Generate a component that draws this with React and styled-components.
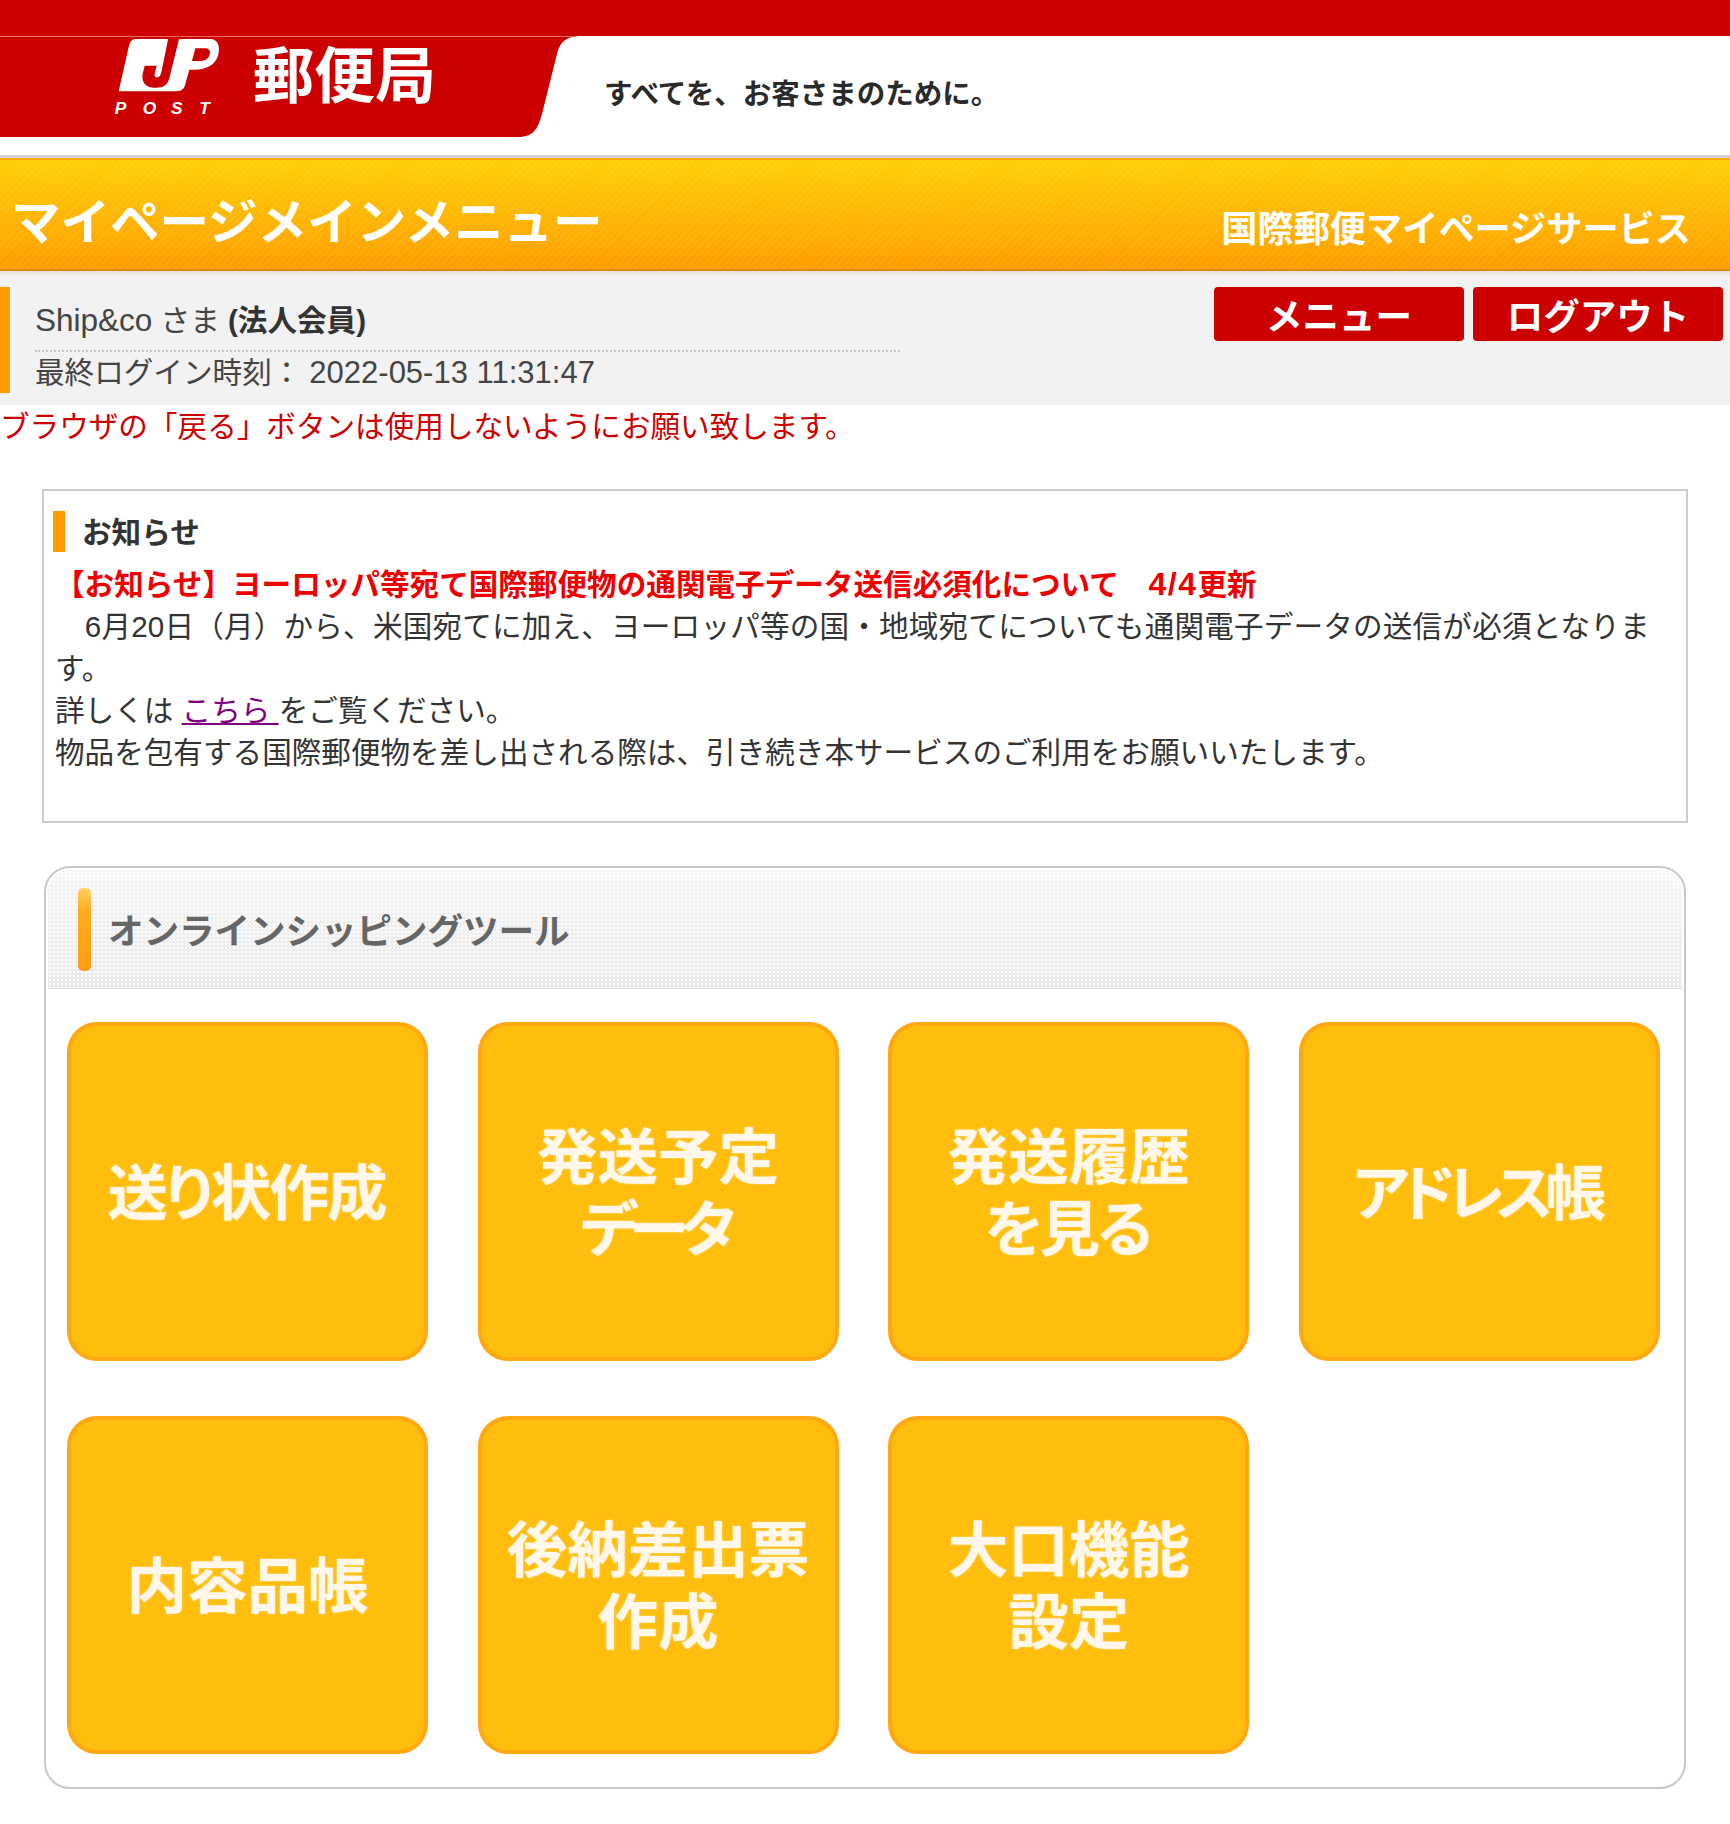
import React from "react";
import styled, { createGlobalStyle } from "styled-components";

const GlobalStyle = createGlobalStyle`
    html, body {
        margin: 0;
        padding: 0;
        background: #fff;
    }
    body {
        font-family: "Liberation Sans", "Noto Sans CJK JP", sans-serif;
        color: #333;
        text-spacing-trim: space-all;
    }
    * {
        box-sizing: border-box;
    }
`;

const Page = styled.div`
    width: 1730px;
    min-height: 1824px;
    background: #fff;
`;

const Header = styled.header`
    height: 158px;
    padding-top: 36px;
    background: linear-gradient(#cc0000 36px, #fff 36px);
    border-bottom: 3px solid #cfcfcf;
`;

const Masthead = styled.div`
    display: flex;
    align-items: center;
`;

const Brand = styled.div`
    display: flex;
    align-items: flex-start;
    width: 582px;
    height: 101px;
    padding-left: 100px;
    background: #cc0000;
    border-top: 1px solid #e46a6a;
    clip-path: path("M0 0H582C566 0 560 6 557 18L542 78C538 92 534 101 518 101H0Z");
`;

const BrandName = styled.span`
    margin: 5px 0 0 31px;
    font-size: 61px;
    line-height: 70px;
    font-weight: 700;
    color: #fff;
`;

const Tagline = styled.span`
    margin: 10px 0 0 22px;
    font-size: 28.5px;
    font-weight: 700;
    color: #2a2a2a;
`;

const Banner = styled.div`
    display: flex;
    justify-content: space-between;
    height: 113px;
    border-top: 2px solid #ffa800;
    border-bottom: 2px solid #dd8c00;
    color: #fff;
    font-weight: 700;
    background:
        repeating-linear-gradient(135deg, rgba(255, 255, 255, 0.06) 0 2px, transparent 2px 5px),
        linear-gradient(#ffd006, #ff9d00);
`;

const BannerTitle = styled.h1`
    margin: 0;
    padding: 31px 0 0 11px;
    font-size: 49.5px;
    line-height: 64px;
    font-weight: 700;
`;

const BannerService = styled.div`
    padding: 45px 39px 0 0;
    font-size: 36.2px;
    line-height: 50px;
`;

const Profile = styled.section`
    display: flex;
    justify-content: space-between;
    height: 134px;
    padding: 16px 7px 0 0;
    background: linear-gradient(#e6dfd8, #f2f2f2 6px);
`;

const UserBlock = styled.div`
    width: 900px;
    height: 106px;
    padding-left: 25px;
    border-left: 10px solid #ff9c00;
    font-size: 29.6px;
    color: #444;
`;

const UserName = styled.div`
    height: 65px;
    padding-top: 12px;
    line-height: 42px;
    border-bottom: 2px dotted #c4c4c4;

    b {
        color: #333;
    }
`;

const Latin = styled.span`
    font-size: 31.5px;
`;

const LastLogin = styled.div`
    padding-top: 1px;
    line-height: 40px;
`;

const LoginTime = styled.span`
    margin-left: 8px;
    font-size: 31px;
`;

const ButtonRow = styled.div`
    display: flex;
    gap: 9px;
`;

const RedButton = styled.a`
    display: flex;
    align-items: center;
    justify-content: center;
    width: 250px;
    height: 54px;
    border-radius: 4px;
    background: #cc0000;
    color: #fff;
    font-size: 36.5px;
    font-weight: 700;
`;

const Warning = styled.p`
    margin: 0;
    padding-top: 1px;
    font-size: 29.6px;
    line-height: 42px;
    color: #cc0000;
`;

const NoticeBox = styled.section`
    height: 334px;
    margin: 41px 42px 0;
    padding: 20px 16px 0 11px;
    border: 2px solid #ccc;
    font-size: 29.6px;
    line-height: 42px;
    color: #333;
`;

const NoticeHeading = styled.h2`
    height: 41px;
    margin: 0 0 11px -2px;
    padding-left: 17px;
    border-left: 12px solid #ff9c00;
    font-size: 29.6px;
    line-height: 43px;
    font-weight: 700;
`;

const NoticeTitle = styled.div`
    color: #ee0000;
    font-weight: 700;
`;

const NoticeDate = styled.span`
    font-size: 32px;
    letter-spacing: 1.5px;
`;

const NoticeLead = styled.div`
    letter-spacing: 0.18px;
`;

const NoticeLink = styled.a`
    color: #800080;
    text-decoration: underline;
`;

const ToolPanel = styled.section`
    width: 1642px;
    height: 923px;
    margin: 43px 0 0 44px;
    padding: 2px;
    border: 2px solid #c8c8c8;
    border-radius: 26px;
`;

const ToolHeader = styled.div`
    display: flex;
    align-items: center;
    height: 119px;
    padding-left: 30px;
    border-radius: 22px 22px 0 0;
    border-bottom: 1px solid #ddd;
    background:
        radial-gradient(circle, rgba(255, 255, 255, 0.9) 1px, transparent 1.3px) 0 0 / 4px 4px,
        linear-gradient(#f6f6f6, #eaeaea);
`;

const ToolMarker = styled.span`
    width: 13px;
    height: 83px;
    margin-right: 17px;
    border-radius: 5px;
    background: linear-gradient(#ffd060, #ffaa1c 30%, #ff9c12);
`;

const ToolTitle = styled.h2`
    margin: -2px 0 0;
    font-size: 35.5px;
    font-weight: 700;
    color: #666;
`;

const TileGrid = styled.div`
    display: grid;
    grid-template-columns: repeat(4, 361px);
    grid-auto-rows: 338.5px;
    column-gap: 49.6px;
    row-gap: 55px;
    padding: 33px 0 0 19px;
`;

const Tile = styled.a`
    display: flex;
    align-items: center;
    justify-content: center;
    padding-top: 5px;
    text-align: center;
    border: 4px solid #ffa812;
    border-radius: 30px;
    background: #ffbe0d;
    color: #fff8ea;
    font-size: 60.5px;
    line-height: 72px;
    font-weight: 700;
    font-feature-settings: "palt";
    text-shadow: 0 0 2px rgba(255, 255, 255, 0.7);
`;

const TileLine = styled.div`
    letter-spacing: ${(props) => props.$squeeze || 0}px;
    padding-right: ${(props) => -(props.$squeeze || 0)}px;
`;

const JpMark = () => (
    <svg width="122" height="84" viewBox="0 18 366 252" aria-label="JP POST">
        <path
            fill="#fff"
            d="M108 24H334C354 26 362 48 354 74C346 100 322 116 282 116H268L254 166C250 176 242 181 228 181H56L86 48C90 32 96 24 108 24Z"
        />
        <path
            fill="#cc0000"
            d="M205 20H238L208 142C202 164 188 172 160 170C136 168 124 152 128 128L134 104H170L164 128C162 138 168 141 176 138C180 136 182 132 184 124Z"
        />
        <path fill="#cc0000" d="M286 52H318C330 54 332 64 328 74C324 84 312 90 298 90H276Z" />
        <text
            x="44 128 213 298"
            y="248"
            fill="#fff"
            fontFamily="Liberation Sans, sans-serif"
            fontSize="52"
            fontWeight="700"
            fontStyle="italic"
        >
            POST
        </text>
    </svg>
);

const tiles = [
    [{ text: "送り状作成", squeeze: -2.4 }],
    [{ text: "発送予定" }, { text: "データ", squeeze: -7.5 }],
    [{ text: "発送履歴" }, { text: "を見る", squeeze: -3 }],
    [{ text: "アドレス帳", squeeze: -7.5 }],
    [{ text: "内容品帳" }],
    [{ text: "後納差出票" }, { text: "作成" }],
    [{ text: "大口機能" }, { text: "設定" }],
];

const App = () => {
    return (
        <Page>
            <GlobalStyle />
            <Header>
                <Masthead>
                    <Brand>
                        <JpMark />
                        <BrandName>郵便局</BrandName>
                    </Brand>
                    <Tagline>すべてを、お客さまのために。</Tagline>
                </Masthead>
            </Header>
            <Banner>
                <BannerTitle>マイページメインメニュー</BannerTitle>
                <BannerService>国際郵便マイページサービス</BannerService>
            </Banner>
            <Profile>
                <UserBlock>
                    <UserName>
                        <Latin>Ship&amp;co</Latin> さま <b>(法人会員)</b>
                    </UserName>
                    <LastLogin>
                        最終ログイン時刻：<LoginTime>2022-05-13 11:31:47</LoginTime>
                    </LastLogin>
                </UserBlock>
                <ButtonRow>
                    <RedButton>メニュー</RedButton>
                    <RedButton>ログアウト</RedButton>
                </ButtonRow>
            </Profile>
            <Warning>ブラウザの「戻る」ボタンは使用しないようにお願い致します。</Warning>
            <NoticeBox>
                <NoticeHeading>お知らせ</NoticeHeading>
                <NoticeTitle>
                    【お知らせ】ヨーロッパ等宛て国際郵便物の通関電子データ送信必須化について{"\u3000"}<NoticeDate>4/4</NoticeDate>更新
                </NoticeTitle>
                <NoticeLead>{"\u30006月20日（月）から、米国宛てに加え、ヨーロッパ等の国・地域宛てについても通関電子データの送信が必須となります。"}</NoticeLead>
                <div>
                    詳しくは <NoticeLink>こちら </NoticeLink>をご覧ください。
                </div>
                <div>物品を包有する国際郵便物を差し出される際は、引き続き本サービスのご利用をお願いいたします。</div>
            </NoticeBox>
            <ToolPanel>
                <ToolHeader>
                    <ToolMarker />
                    <ToolTitle>オンラインシッピングツール</ToolTitle>
                </ToolHeader>
                <TileGrid>
                    {tiles.map((lines) => (
                        <Tile key={lines[0].text}>
                            <span>
                                {lines.map((line) => (
                                    <TileLine key={line.text} $squeeze={line.squeeze}>
                                        {line.text}
                                    </TileLine>
                                ))}
                            </span>
                        </Tile>
                    ))}
                </TileGrid>
            </ToolPanel>
        </Page>
    );
};

export default App;
